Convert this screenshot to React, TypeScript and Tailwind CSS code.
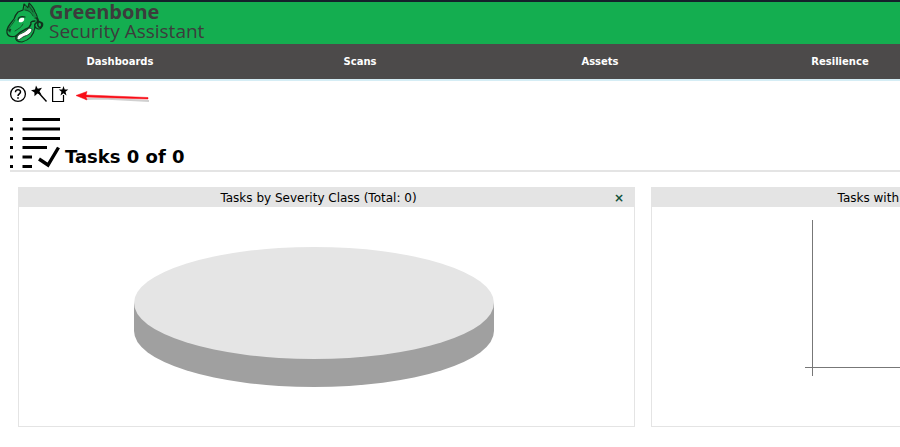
import type { ReactNode } from "react";

const navItems = ["Dashboards", "Scans", "Assets", "Resilience"];

function DogLogo() {
  return (
    <svg width="44" height="42" viewBox="4 2 44 42" fill="none" stroke="#12301c" strokeWidth="1.2" strokeLinejoin="round" strokeLinecap="round" aria-hidden="true">
      <path fill="#14ae50" d="M18 12 L23 10 L24 4 L28 8 L29 3 C32 6 34 8 35 12 C37 15 38 17 37 20 L40 22 C43 22 44 25 41 28 C39 30 36 28 35 27 C34 34 30 40 22 42 C17 42 15 40 16 36 C12 37 8 37 7 33 C6 28 10 24 14 19 C15 16 16 14 18 12 Z" />
      <path fill="#14873f" stroke="none" d="M25 5 L28 9 L30 5 C32 7 33 9 34 12 C36 15 37 17 36 19 L34 19 C34 15 31 12 26 11 L24 10 Z" />
      <path strokeWidth="0.7" d="M25 10 C28 10 31 12 33 16 M29 5 C29 8 32 9 33 12 M15 20 C12 25 10 26 9 29 M23 24 C22 27 18 29 15 31" />
      <path strokeWidth="1.4" d="M16 36 C19 32 22 31 26 29 C29 28 30 27 31 24 C30 22 32 21 35 21" />
      <path fill="#fff" strokeWidth="0.8" d="M17 38 C18 33 23 34 27 30 C29 28 30 28 32 29 C32 32 29 35 25 36 C22 37 20 40 18 40 Z" />
      <path fill="#fff" stroke="none" d="M19 22 C18 19 21 17 24 18 C25 21 22 23 19 22 Z" />
      <path strokeWidth="1.1" d="M18 20 C18 17 21 16 25 17" />
      <path fill="#12301c" strokeWidth="0.5" d="M8 30 L11 29 L10 32 Z" />
      <path strokeWidth="1.5" d="M36 18 C38 18 39 20 37 22 C41 21 43 24 41 27 C39 28 37 26 38 23 M35 27 C34 24 36 22 38 23" />
    </svg>
  );
}

function WandIcon() {
  return (
    <svg width="17" height="18" viewBox="0 0 17 18" aria-hidden="true">
      <path d="M6 6 L15.5 16.5" stroke="#000" strokeWidth="1.4" />
      <path d="M5 0.5 L6.8 3.8 L11 2.8 L8.500 6.200 L10.500 9.800 L6.500 8.600 L3.500 11.200 L3.400 7.500 L0 5.300 L4 4.500 Z" />
    </svg>
  );
}

function NewIcon() {
  return (
    <svg width="17" height="18" viewBox="0 0 17 18" aria-hidden="true">
      <path d="M8.500 2.500 H0.600 V16.500 H11.500 V10" fill="none" stroke="#000" strokeWidth="1.2" />
      <path d="M11.500 1 L12.700 4.500 H16.300 L13.500 6.800 L14.500 10.500 L11.500 8.300 L8.500 10.500 L9.500 6.800 L6.700 4.500 H10.300 Z" />
    </svg>
  );
}

function HelpIcon() {
  return (
    <svg width="18" height="18" viewBox="0 0 18 18" fill="none" stroke="#000" aria-hidden="true">
      <circle cx="9" cy="9" r="7.400" strokeWidth="1.3" />
      <path d="M6.500 7.200 C6.500 3.700 11.600 4 11.500 7 C11.400 8.800 9 9 9 11" strokeWidth="1.5" />
      <path d="M9 12.200 V13.800" strokeWidth="1.6" />
    </svg>
  );
}

function RedArrow() {
  return (
    <svg width="80" height="16" viewBox="0 0 80 16" aria-hidden="true">
      <path d="M12 11 L30 10.500 L76 13" fill="none" stroke="#d0d0d0" strokeWidth="2" />
      <path d="M3 7.500 L14 3.500 L13 7 L75 9.500 V11 L13 9 L14 12 Z" fill="#f80d16" stroke="#f80d16" strokeWidth="0.500" />
    </svg>
  );
}

function TaskIcon() {
  return (
    <svg width="50" height="50" viewBox="0 0 50 50" aria-hidden="true">
      <g stroke="#000" strokeWidth="3">
        <path d="M0 1.500 H3 M0 11 H3 M0 20.500 H3 M0 29.500 H3 M0 39 H3 M0 48.500 H3" />
        <path d="M12.500 1.500 H50 M12.500 11 H50 M12.500 20.500 H50 M12.500 29.500 H37 M12.500 39 H22 M12.500 48.500 H22" />
      </g>
      <path d="M29 41 L38 47 L48.500 29.500" fill="none" stroke="#000" strokeWidth="3.400" />
    </svg>
  );
}

function Panel({ title, titleClass, className, action, children }: { title: string; titleClass: string; className: string; action?: ReactNode; children: ReactNode }) {
  return (
    <section className={`flex h-60 flex-col border border-[#e4e4e4] ${className}`}>
      <header className="flex h-[19px] shrink-0 items-center bg-[#e4e4e4] text-xs">
        <h2 className={`grow whitespace-nowrap ${titleClass}`}>{title}</h2>
        {action}
      </header>
      {children}
    </section>
  );
}

export default function App() {
  return (
    <div className="overflow-hidden bg-white font-['DejaVu_Sans',sans-serif] text-black">
      <header className="flex h-11 items-start border-t-2 border-[#15202b] bg-[#14ae50] pl-1">
        <DogLogo />
        <div className="pl-px font-['Open_Sans',sans-serif] text-[#3c3c3c]">
          <div className="text-xl leading-5 font-bold">Greenbone</div>
          <div className="text-[19px] leading-[18px]">Security Assistant</div>
        </div>
      </header>

      <nav className="flex h-[35px] bg-[#4c4a4a]">
        {navItems.map((item) => (
          <a key={item} href="#" className="flex w-60 shrink-0 items-center justify-center text-[10px] font-bold text-white">
            {item}
          </a>
        ))}
      </nav>

      <main className="border-t-2 border-[#d5edf5] pt-[3px] pl-[10px]">
        <div className="flex h-5 items-center gap-1">
          <button type="button" aria-label="Help" className="-ml-px"><HelpIcon /></button>
          <button type="button" aria-label="Task wizard"><WandIcon /></button>
          <button type="button" aria-label="New task"><NewIcon /></button>
          <span className="pt-1"><RedArrow /></span>
        </div>

        <div className="mt-3 flex h-14 items-end gap-[5px] border-b-2 border-[#e4e4e4] pb-0.5">
          <TaskIcon />
          <h1 className="text-lg leading-[22px] font-bold">Tasks 0 of 0</h1>
        </div>

        <div className="grid grid-cols-[minmax(0,617px)_minmax(0,1fr)] gap-4 pt-[15px] pl-2">
          <Panel
            title="Tasks by Severity Class (Total: 0)"
            titleClass="pl-1 text-center"
            className=""
            action={<button type="button" aria-label="Close" className="w-5 pr-3 text-xs leading-4 font-bold text-[#11513a]">×</button>}
          >
            <div className="flex grow items-center justify-center pr-[25px]">
              <svg width="360" height="140" viewBox="0 0 360 140" className="max-w-full" role="img" aria-label="Empty pie chart">
                <path d="M0 56 V84 A180 56 0 0 0 360 84 V56 Z" fill="#a0a0a0" />
                <ellipse cx="180" cy="56" rx="180" ry="56" fill="#e5e5e5" />
              </svg>
            </div>
          </Panel>
          <Panel title="Tasks with" titleClass="pr-px text-right" className="border-r-0">
            <div className="flex justify-end pt-3">
              <svg width="95" height="157" viewBox="0 0 95 157" role="img" aria-label="Empty bar chart">
                <path d="M7.500 1 V157 M0 148.500 H95" fill="none" stroke="#777" />
              </svg>
            </div>
          </Panel>
        </div>
      </main>
    </div>
  );
}
